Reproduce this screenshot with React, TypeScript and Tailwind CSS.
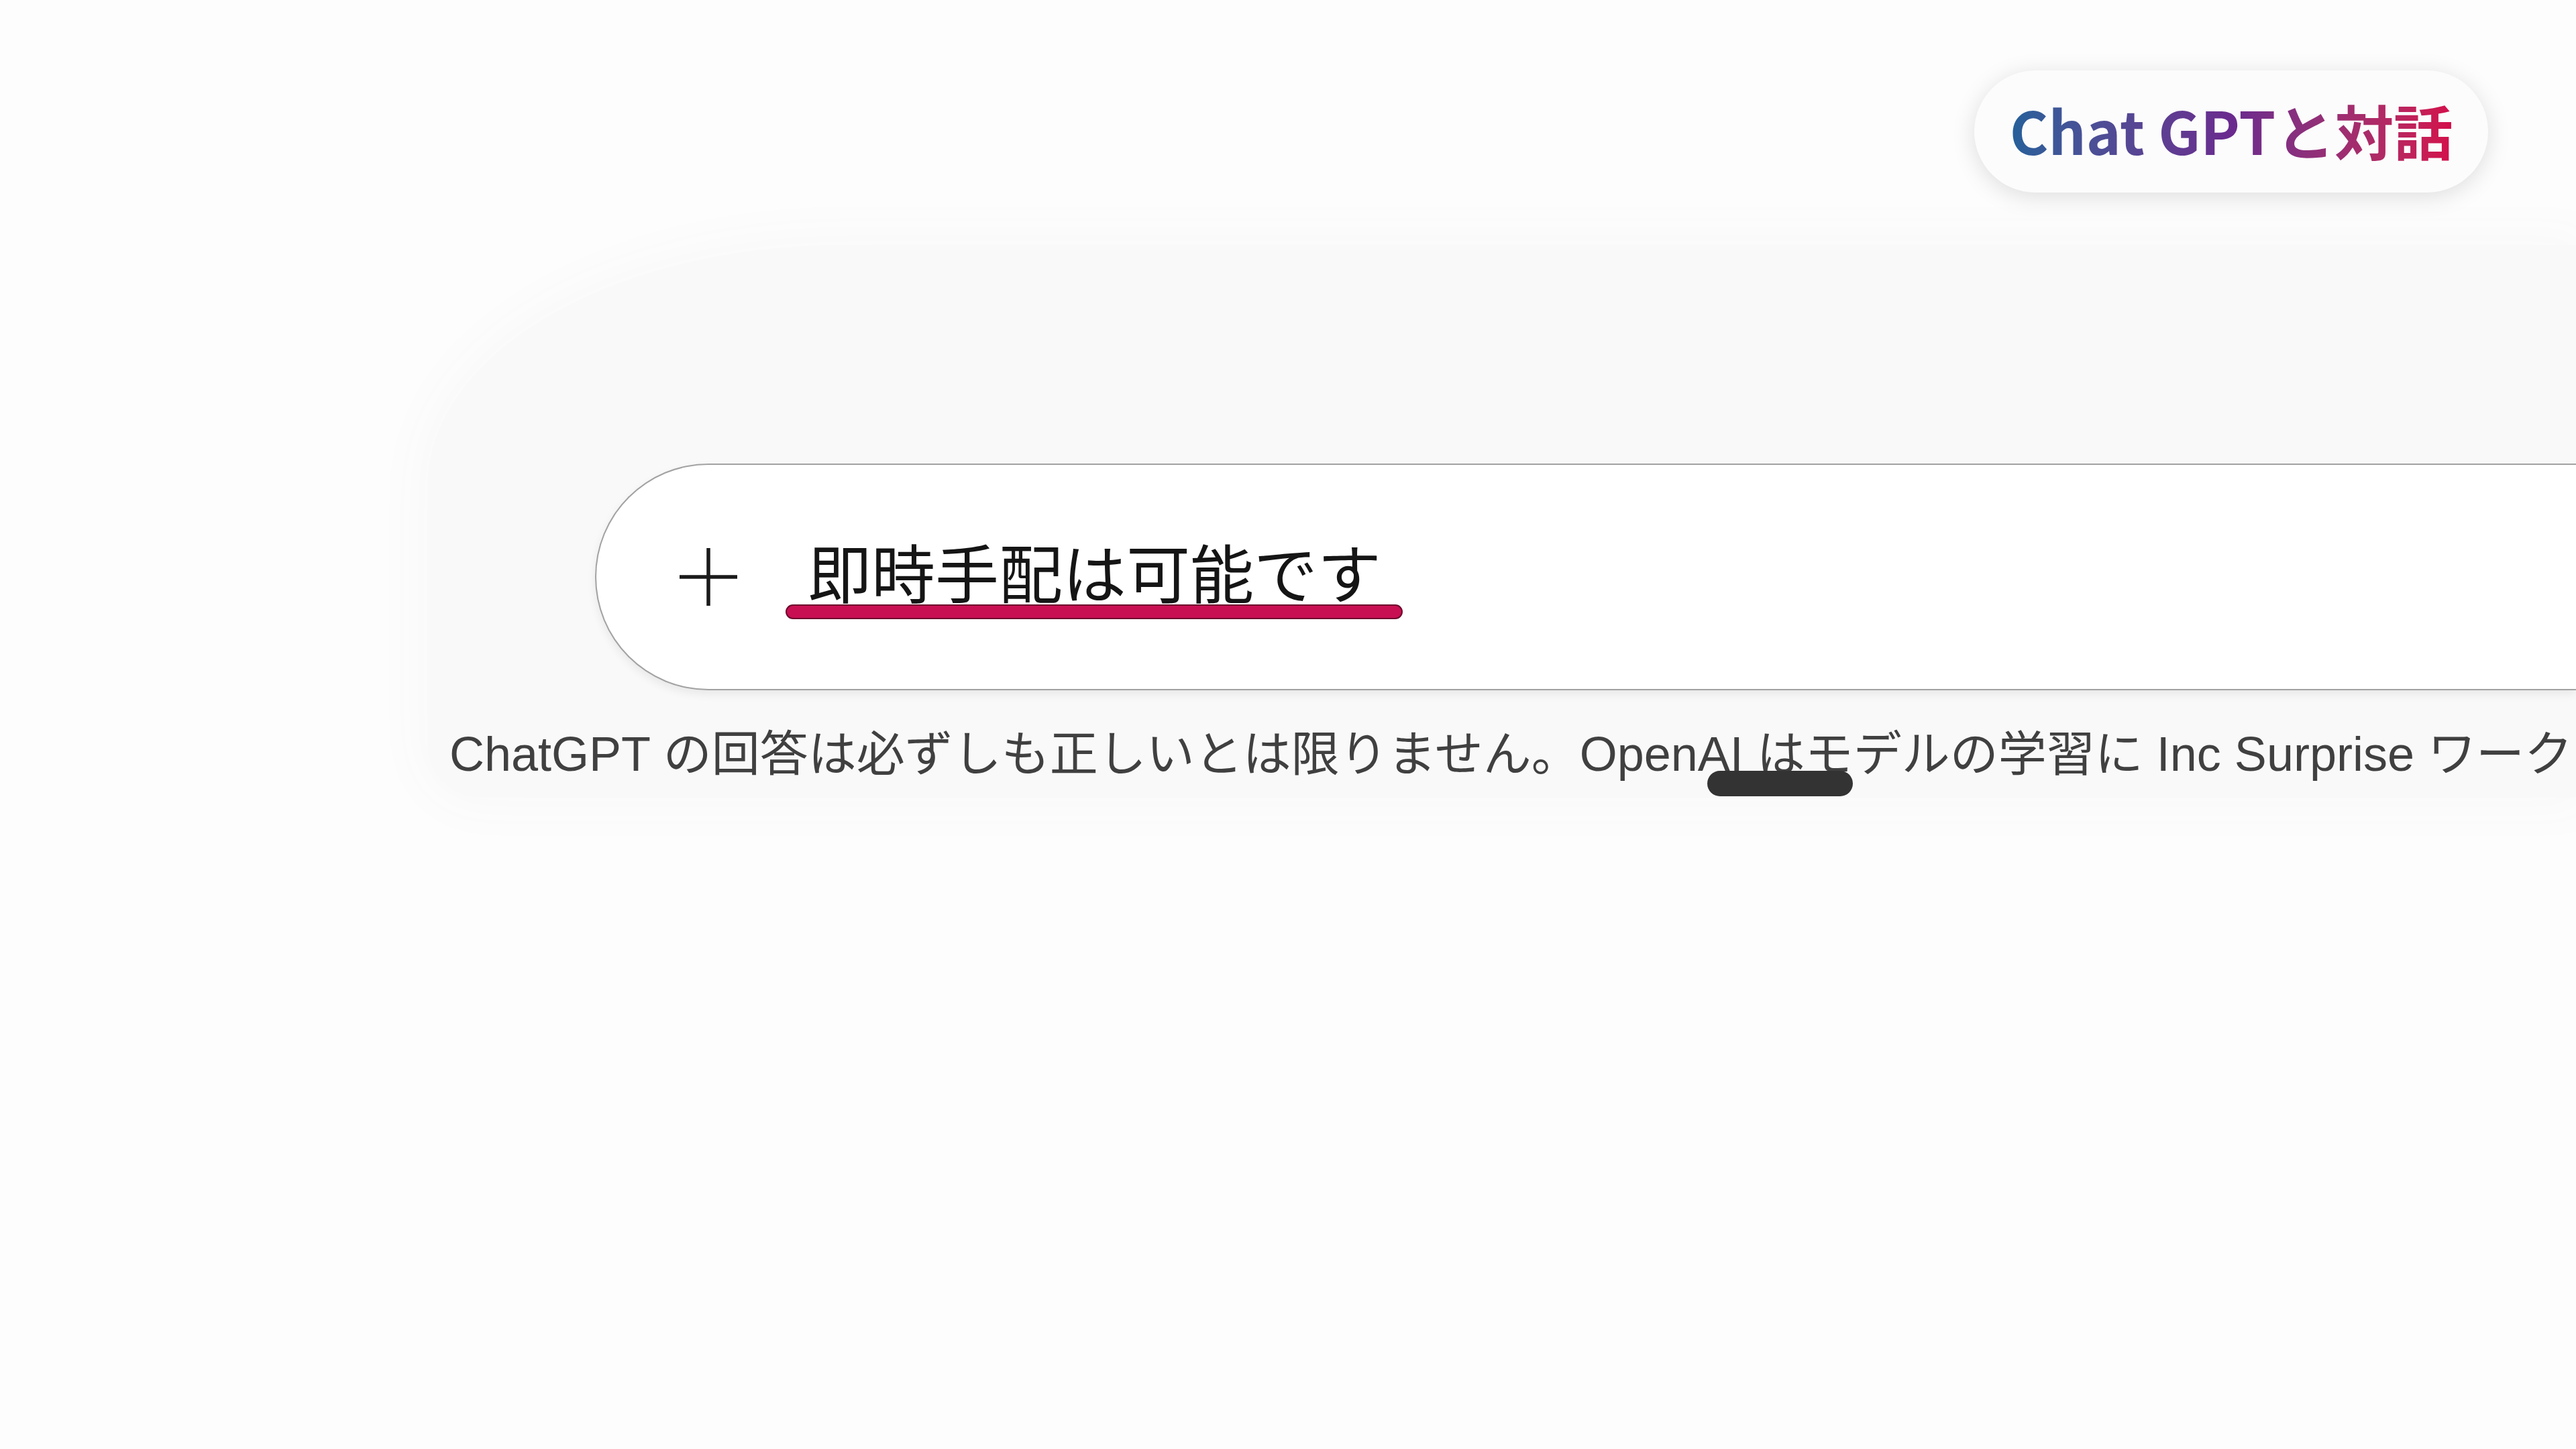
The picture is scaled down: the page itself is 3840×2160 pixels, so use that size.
import React from 'react';

export default function App() {
  return (
    <div className="relative w-[3840px] h-[2160px] overflow-hidden bg-[#fdfdfd] font-['Liberation_Sans','Noto_Sans_CJK_JP',sans-serif]">
      <div className="flex justify-end pt-[105px] pr-[131px]">
        <div className="flex h-[182px] w-[766px] items-center justify-center rounded-full bg-[#fcfcfc] shadow-[0_6px_34px_rgba(0,0,0,0.13)]">
          <span className="bg-gradient-to-r from-[#23609a] via-[#6a2a8e] to-[#d40c4a] bg-clip-text pb-[6px] font-['Noto_Sans_CJK_JP',sans-serif] text-[88px] font-bold leading-none text-transparent">
            Chat GPTと対話
          </span>
        </div>
      </div>

      <div className="mt-[78px] ml-[637px] rounded-tl-[620px_360px] rounded-bl-[80px] bg-[#f9f9f9] pt-[326px] pl-[33px] pb-[22px] shadow-[0_0_70px_20px_#f9f9f9]">
        <div className="ml-[217px] flex h-[338px] items-center rounded-l-full border-2 border-r-0 border-[#a2a2a2] bg-white pl-[124px] shadow-[0_6px_14px_rgba(0,0,0,0.07)]">
          <svg width="86" height="86" viewBox="0 0 86 86" className="shrink-0">
            <path d="M43 0V86M0 43H86" stroke="#1a1a1a" strokeWidth="5.5" />
          </svg>
          <span className="relative mb-[20px] ml-[105px] font-['Noto_Sans_CJK_JP',sans-serif] text-[95px] leading-none text-[#151515]">
            <span className="absolute -left-[33px] -right-[32px] top-[98px] h-[22px] rounded-full border-2 border-[#6d0a2c] bg-[#c80f52]" />
            <span className="relative">即時手配は可能です</span>
          </span>
        </div>
        <p className="mt-[52px] whitespace-nowrap text-[72px] leading-[86px] text-[#404040]">
          ChatGPT の回答は必ずしも正しいとは限りません。OpenAI はモデルの学習に Inc Surprise ワークスペースのデータを使用しません。
        </p>
      </div>

      <div className="absolute left-[2545px] top-[1149px] h-[38px] w-[217px] rounded-full bg-[#333333]" />
    </div>
  );
}
